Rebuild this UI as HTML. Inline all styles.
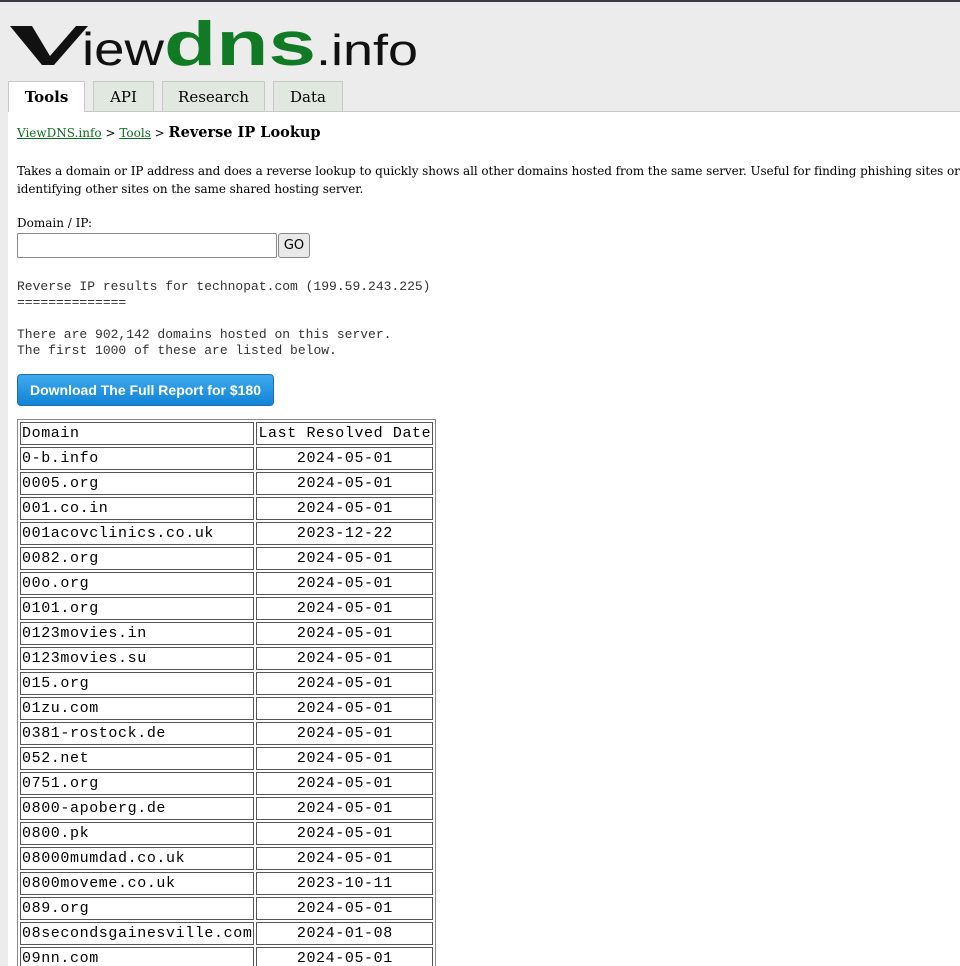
<!DOCTYPE html>
<html><head><meta charset="utf-8"><style>
html,body{margin:0;padding:0;width:960px;height:966px;overflow:hidden;background:#ececec;}
body{font-family:"DejaVu Serif","Liberation Serif",serif;font-size:12px;color:#000;position:relative;border-top:2px solid #3a3a44;box-sizing:border-box;}
.logo{position:absolute;left:10px;top:14px;height:55px;white-space:nowrap;font-family:"Liberation Sans",sans-serif;}
.tab{position:absolute;top:79px;height:30px;box-sizing:border-box;background:#e0e8e0;border:1px solid #c8c8c8;border-bottom:none;font-size:15px;text-align:center;line-height:30px;}
.tab.on{background:#fff;font-weight:bold;height:31px;z-index:2;}
.content{position:absolute;left:8px;top:109px;width:960px;height:870px;background:#fff;border-top:1px solid #c8c8c8;}
.in{position:absolute;left:9px;}
a{color:#0b6b1f;}
.mono{font-family:"Liberation Mono",monospace;font-size:13px;color:#333;white-space:pre;line-height:16px;}
table{border-collapse:separate;border:1px solid #888;border-spacing:2px;font-family:"Liberation Mono",monospace;font-size:15px;letter-spacing:0.6px;}
td{border:1px solid #555;height:21px;padding:0 1px;line-height:21px;white-space:nowrap;}
td.d{text-align:center;}
</style></head><body>
<div class="logo">
<svg width="410" height="55" viewBox="0 0 410 55">
<polygon points="0,10 22,10 40,40 66,10 78,10 44,49 32,49" fill="#111"/>
<text x="72" y="49" font-family="Liberation Sans,sans-serif" font-size="46" fill="#111" textLength="82" lengthAdjust="spacingAndGlyphs">iew</text>
<text x="154" y="49" font-family="Liberation Sans,sans-serif" font-weight="bold" font-size="62" fill="#117a24" textLength="152" lengthAdjust="spacingAndGlyphs">dns</text>
<text x="306" y="49" font-family="Liberation Sans,sans-serif" font-size="44" fill="#111" textLength="102" lengthAdjust="spacingAndGlyphs">.info</text>
</svg>
</div>
<div class="tab on" style="left:8px;width:77px;">Tools</div>
<div class="tab" style="left:93px;width:61px;">API</div>
<div class="tab" style="left:162px;width:103px;">Research</div>
<div class="tab" style="left:273px;width:70px;">Data</div>
<div class="content">
<div class="in" style="top:12px;white-space:nowrap;"><a href="#">ViewDNS.info</a> &gt; <a href="#">Tools</a> &gt; <b style="font-size:14.5px;">Reverse IP Lookup</b></div>
<div class="in" style="top:50px;white-space:nowrap;line-height:18px;letter-spacing:-0.08px;">Takes a domain or IP address and does a reverse lookup to quickly shows all other domains hosted from the same server. Useful for finding phishing sites or<br>identifying other sites on the same shared hosting server.</div>
<div class="in" style="top:104px;">Domain / IP:</div>
<div class="in" style="top:121px;"><span style="display:inline-block;width:258px;height:23px;border:1px solid #888;border-radius:2px;vertical-align:top;"></span><span style="display:inline-block;width:30px;height:23px;border:1px solid #888;border-radius:3px;background:#e9e9e9;font-family:'DejaVu Sans',sans-serif;font-size:13px;text-align:center;line-height:23px;vertical-align:top;margin-left:1px;">GO</span></div>
<div class="in mono" style="top:167px;">Reverse IP results for technopat.com (199.59.243.225)
==============

There are 902,142 domains hosted on this server.
The first 1000 of these are listed below.</div>
<div class="in" style="top:262px;width:255px;height:30px;border:1px solid #1a6fb0;border-radius:4px;background:linear-gradient(#3fa9ec,#1184d6);color:#fff;font-family:'Liberation Sans',sans-serif;font-weight:bold;font-size:14px;line-height:30px;text-align:center;">Download The Full Report for $180</div>
<div class="in" style="top:307px;">
<table>
<tr><td style="width:228px">Domain</td><td style="width:171px">Last Resolved Date</td></tr>
<tr><td>0-b.info</td><td class="d">2024-05-01</td></tr>
<tr><td>0005.org</td><td class="d">2024-05-01</td></tr>
<tr><td>001.co.in</td><td class="d">2024-05-01</td></tr>
<tr><td>001acovclinics.co.uk</td><td class="d">2023-12-22</td></tr>
<tr><td>0082.org</td><td class="d">2024-05-01</td></tr>
<tr><td>00o.org</td><td class="d">2024-05-01</td></tr>
<tr><td>0101.org</td><td class="d">2024-05-01</td></tr>
<tr><td>0123movies.in</td><td class="d">2024-05-01</td></tr>
<tr><td>0123movies.su</td><td class="d">2024-05-01</td></tr>
<tr><td>015.org</td><td class="d">2024-05-01</td></tr>
<tr><td>01zu.com</td><td class="d">2024-05-01</td></tr>
<tr><td>0381-rostock.de</td><td class="d">2024-05-01</td></tr>
<tr><td>052.net</td><td class="d">2024-05-01</td></tr>
<tr><td>0751.org</td><td class="d">2024-05-01</td></tr>
<tr><td>0800-apoberg.de</td><td class="d">2024-05-01</td></tr>
<tr><td>0800.pk</td><td class="d">2024-05-01</td></tr>
<tr><td>08000mumdad.co.uk</td><td class="d">2024-05-01</td></tr>
<tr><td>0800moveme.co.uk</td><td class="d">2023-10-11</td></tr>
<tr><td>089.org</td><td class="d">2024-05-01</td></tr>
<tr><td>08secondsgainesville.com</td><td class="d">2024-01-08</td></tr>
<tr><td>09nn.com</td><td class="d">2024-05-01</td></tr>
</table>
</div>
</div>
</body></html>
